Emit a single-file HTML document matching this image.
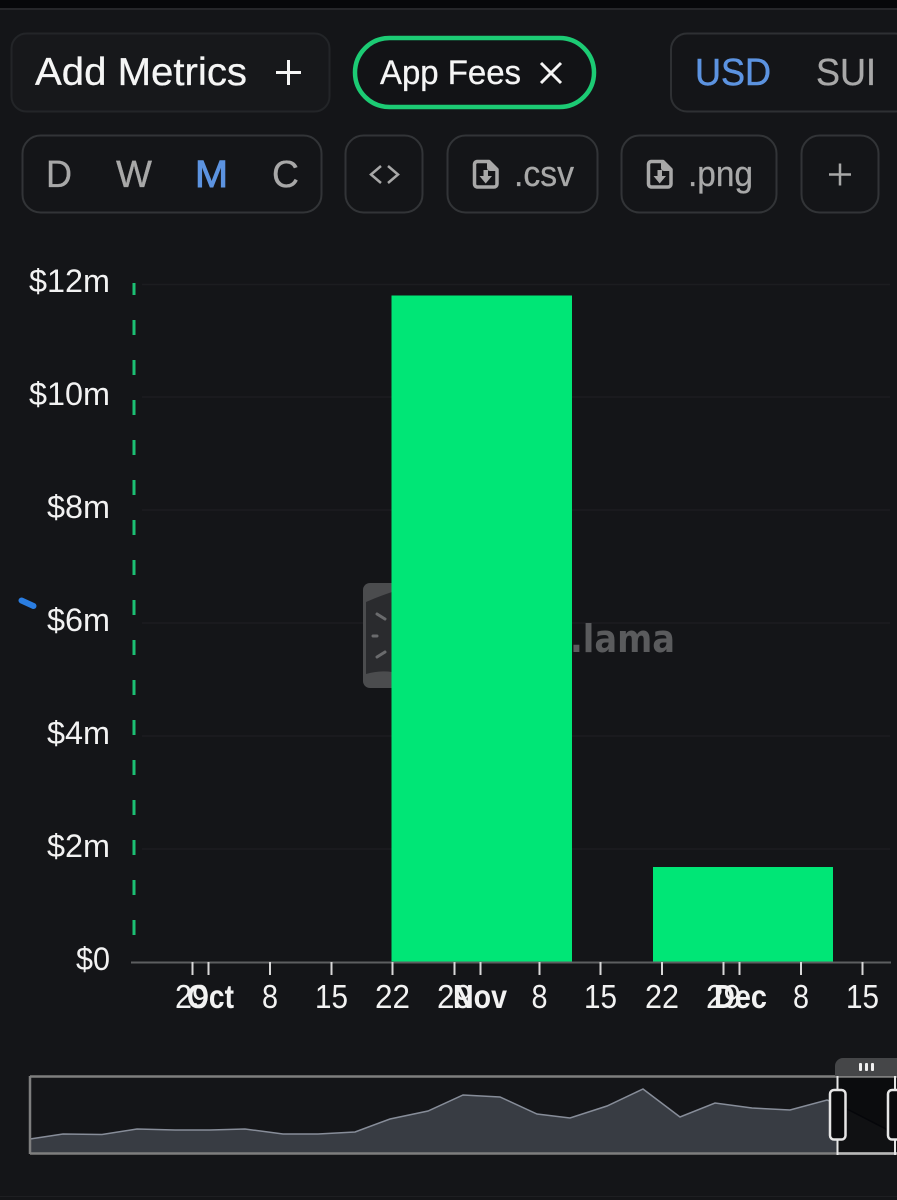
<!DOCTYPE html>
<html><head><meta charset="utf-8"><style>
html,body{margin:0;padding:0;background:#141518;width:897px;height:1200px;overflow:hidden}
svg{display:block;position:absolute;left:0;top:0;filter:blur(.3px)}
text{font-family:"Liberation Sans",sans-serif}
</style></head><body>
<svg width="897" height="1200" viewBox="0 0 897 1200" xmlns="http://www.w3.org/2000/svg">
<rect width="897" height="1200" fill="#141518"/>
<rect width="897" height="8" fill="#07080a"/>
<rect y="8" width="897" height="2" fill="#26272a"/>
<rect y="1196" width="897" height="1" fill="#1e1f22"/>

<!-- top row -->
<rect x="11.500" y="33.500" width="318" height="78" rx="15" fill="#17181b" stroke="#232528" stroke-width="2"/>
<text x="35" y="85" font-size="39" fill="#f5f5f5" stroke="#f5f5f5" stroke-width=".3" textLength="212" lengthAdjust="spacingAndGlyphs">Add Metrics</text>
<path d="M276 72.500H301M288.500 60V85" stroke="#f5f5f5" stroke-width="3" fill="none"/>
<rect x="355" y="38" width="239" height="69" rx="34.500" fill="#121316" stroke="#1ccb74" stroke-width="4.500"/>
<text x="380" y="84" font-size="34" fill="#f5f5f5" stroke="#f5f5f5" stroke-width=".3" textLength="141" lengthAdjust="spacingAndGlyphs">App Fees</text>
<path d="M541 63L561 83M561 63L541 83" stroke="#f5f5f5" stroke-width="3" fill="none"/>
<rect x="671" y="33.500" width="240" height="78" rx="16" fill="#141518" stroke="#2e3033" stroke-width="2"/>
<text x="695" y="85" font-size="38" fill="#5c93e0" textLength="76" lengthAdjust="spacingAndGlyphs" stroke="#5c93e0" stroke-width=".5">USD</text>
<text x="816" y="85" font-size="38" fill="#a8a8a8" stroke="#a8a8a8" stroke-width=".3" textLength="60" lengthAdjust="spacingAndGlyphs">SUI</text>

<!-- second row -->
<rect x="22.500" y="135.500" width="299" height="77" rx="18" fill="none" stroke="#323437" stroke-width="2"/>
<text x="46" y="187" font-size="38" fill="#a8a8a8" stroke="#a8a8a8" stroke-width=".3" textLength="26" lengthAdjust="spacingAndGlyphs">D</text>
<text x="116" y="187" font-size="38" fill="#a8a8a8" stroke="#a8a8a8" stroke-width=".3" textLength="36" lengthAdjust="spacingAndGlyphs">W</text>
<text x="195" y="187" font-size="38" fill="#5c93e0" textLength="33" lengthAdjust="spacingAndGlyphs" stroke="#5c93e0" stroke-width="1">M</text>
<text x="272" y="187" font-size="38" fill="#a8a8a8" stroke="#a8a8a8" stroke-width=".3" textLength="27" lengthAdjust="spacingAndGlyphs">C</text>

<rect x="345.500" y="135.500" width="77" height="77" rx="18" fill="none" stroke="#323437" stroke-width="2"/>
<path d="M381 166L371 174.500L381 183M388 166L398 174.500L388 183" stroke="#a8a8a8" stroke-width="2.500" fill="none"/>

<rect x="447.500" y="135.500" width="150" height="77" rx="18" fill="none" stroke="#323437" stroke-width="2"/>
<path d="M477 161.500H489L497 169.500V184A3 3 0 0 1 494 187H477A3 3 0 0 1 474.500 184V164A3 3 0 0 1 477 161.500Z" fill="#141518" stroke="#a8a8a8" stroke-width="3.500" stroke-linejoin="round"/>
<path d="M487 161L497.500 171H490A3 3 0 0 1 487 168Z" fill="#a8a8a8"/>
<path d="M483.500 170H488V176H492L485.700 183.500L479.500 176H483.500Z" fill="#a8a8a8"/>
<text x="514" y="186" font-size="36" fill="#a8a8a8" stroke="#a8a8a8" stroke-width=".3" textLength="60" lengthAdjust="spacingAndGlyphs">.csv</text>

<rect x="621.500" y="135.500" width="155" height="77" rx="18" fill="none" stroke="#323437" stroke-width="2"/>
<path d="M651 161.500H663L671 169.500V184A3 3 0 0 1 668 187H651A3 3 0 0 1 648.500 184V164A3 3 0 0 1 651 161.500Z" fill="#141518" stroke="#a8a8a8" stroke-width="3.500" stroke-linejoin="round"/>
<path d="M661 161L671.500 171H664A3 3 0 0 1 661 168Z" fill="#a8a8a8"/>
<path d="M657.500 170H662V176H666L659.700 183.500L653.500 176H657.500Z" fill="#a8a8a8"/>
<text x="688" y="186" font-size="36" fill="#a8a8a8" stroke="#a8a8a8" stroke-width=".3" textLength="65" lengthAdjust="spacingAndGlyphs">.png</text>

<rect x="801.500" y="135.500" width="77" height="77" rx="18" fill="none" stroke="#323437" stroke-width="2"/>
<path d="M829 174.500H851M840 163.500V185.500" stroke="#a8a8a8" stroke-width="2.500" fill="none"/>

<!-- grid -->
<g stroke="#1c1d20" stroke-width="1.500">
<path d="M142 284.500H890M142 397H890M142 510H890M142 623H890M142 736H890M142 849H890"/>
</g>

<!-- watermark -->
<rect x="363" y="583" width="40" height="105" rx="7" fill="#4b4c4e"/>
<path d="M366 602Q380 596 392 592V672Q380 670 366 674Z" fill="#2a2b2e"/>
<path d="M377 614L385 619M373 636L377 636M377 657L385 652" stroke="#6a6b6d" stroke-width="3" stroke-linecap="round"/>
<text x="570" y="652" font-size="38" font-weight="700" fill="#5a5b5d" textLength="105" lengthAdjust="spacingAndGlyphs" style='font-family:"DejaVu Sans",sans-serif'>.lama</text>

<!-- dashed line -->
<path d="M134 283V295M134 320V335M134 360V375M134 400V415M134 440V455M134 480V495M134 520V535M134 560V575M134 600V615M134 640V655M134 680V695M134 720V735M134 760V775M134 800V815M134 840V855M134 880V895M134 920V935" stroke="#1cc073" stroke-width="3" fill="none"/>
<path d="M21.500 600.500L33.500 606" stroke="#2a7de1" stroke-width="6" stroke-linecap="round"/>

<!-- bars -->
<rect x="391.500" y="295.500" width="180.500" height="666.500" fill="#00e676"/>
<rect x="653" y="867" width="180" height="95" fill="#00e676"/>

<!-- axis -->
<path d="M131 962.500H891" stroke="#5d5e60" stroke-width="2"/>
<path d="M192.500 962V975M208.500 962V975M270 962V975M331.500 962V975M392.500 962V975M454.500 962V975M480.500 962V975M539.500 962V975M600.500 962V975M662 962V975M723.500 962V975M739.500 962V975M801 962V975M862.500 962V975" stroke="#d8d8d8" stroke-width="2"/>

<g fill="#f2f2f2" font-size="32" lengthAdjust="spacingAndGlyphs">
<text x="29" y="292" textLength="81" lengthAdjust="spacingAndGlyphs">$12m</text>
<text x="29" y="405" textLength="81" lengthAdjust="spacingAndGlyphs">$10m</text>
<text x="47" y="518" textLength="63" lengthAdjust="spacingAndGlyphs">$8m</text>
<text x="47" y="631" textLength="63" lengthAdjust="spacingAndGlyphs">$6m</text>
<text x="47" y="744" textLength="63" lengthAdjust="spacingAndGlyphs">$4m</text>
<text x="47" y="857" textLength="63" lengthAdjust="spacingAndGlyphs">$2m</text>
<text x="76" y="970" textLength="34" lengthAdjust="spacingAndGlyphs">$0</text>
</g>

<g fill="#f2f2f2" font-size="33">
<text x="175" y="1008" textLength="34" lengthAdjust="spacingAndGlyphs">29</text>
<text x="262" y="1008" textLength="16" lengthAdjust="spacingAndGlyphs">8</text>
<text x="315" y="1008" textLength="33" lengthAdjust="spacingAndGlyphs">15</text>
<text x="375" y="1008" textLength="35" lengthAdjust="spacingAndGlyphs">22</text>
<text x="437" y="1008" textLength="35" lengthAdjust="spacingAndGlyphs">29</text>
<text x="531.500" y="1008" textLength="16" lengthAdjust="spacingAndGlyphs">8</text>
<text x="584" y="1008" textLength="33" lengthAdjust="spacingAndGlyphs">15</text>
<text x="645" y="1008" textLength="34" lengthAdjust="spacingAndGlyphs">22</text>
<text x="706" y="1008" textLength="35" lengthAdjust="spacingAndGlyphs">29</text>
<text x="793" y="1008" textLength="16" lengthAdjust="spacingAndGlyphs">8</text>
<text x="846" y="1008" textLength="33" lengthAdjust="spacingAndGlyphs">15</text>
<g font-weight="700">
<text x="187" y="1008" textLength="47" lengthAdjust="spacingAndGlyphs">Oct</text>
<text x="453" y="1008" textLength="54" lengthAdjust="spacingAndGlyphs">Nov</text>
<text x="714" y="1008" textLength="53" lengthAdjust="spacingAndGlyphs">Dec</text>
</g>
</g>

<!-- data zoom -->
<path d="M30 1139L63 1134L102 1134.500L137 1129L175 1130L210 1130L245 1129L283 1134L318 1134L355 1132L390 1119L428 1111L463 1095L500 1097L537 1114L570 1118L607 1106L643 1089L680 1117L715 1103L752 1108L790 1110L827 1100L838 1104V1153H30Z" fill="#383c43"/>
<path d="M30 1139L63 1134L102 1134.500L137 1129L175 1130L210 1130L245 1129L283 1134L318 1134L355 1132L390 1119L428 1111L463 1095L500 1097L537 1114L570 1118L607 1106L643 1089L680 1117L715 1103L752 1108L790 1110L827 1100L838 1104" fill="none" stroke="#878d99" stroke-width="1.500"/>
<rect x="838" y="1077" width="57" height="76" fill="#0b0c0e"/>
<path d="M838 1104L847 1109L884 1128L897 1136V1153H838Z" fill="#101113"/>
<path d="M847 1109L884 1128L897 1136" fill="none" stroke="#05060a" stroke-width="1.500"/>
<path d="M30 1076.500H897M30 1153.500H897M30 1076V1154" stroke="#7e7e7e" stroke-width="2.500" fill="none"/>
<path d="M837.500 1153.500H897" stroke="#b8b8b8" stroke-width="2.500"/>
<path d="M835 1076V1066A8 8 0 0 1 843 1058H897V1076Z" fill="#454648"/>
<rect x="859" y="1063" width="3" height="8" rx="1" fill="#f0f0f0"/>
<rect x="865" y="1063" width="3" height="8" rx="1" fill="#f0f0f0"/>
<rect x="871" y="1063" width="3" height="8" rx="1" fill="#f0f0f0"/>
<path d="M837.500 1076V1155M895 1076V1155" stroke="#e6e6e6" stroke-width="2"/>
<rect x="830" y="1090" width="15.500" height="49.500" rx="4" fill="#0a0b0d" stroke="#e6e6e6" stroke-width="2.500"/>
<rect x="888" y="1090" width="16" height="49.500" rx="4" fill="#0a0b0d" stroke="#e6e6e6" stroke-width="2.500"/>
</svg>
</body></html>
